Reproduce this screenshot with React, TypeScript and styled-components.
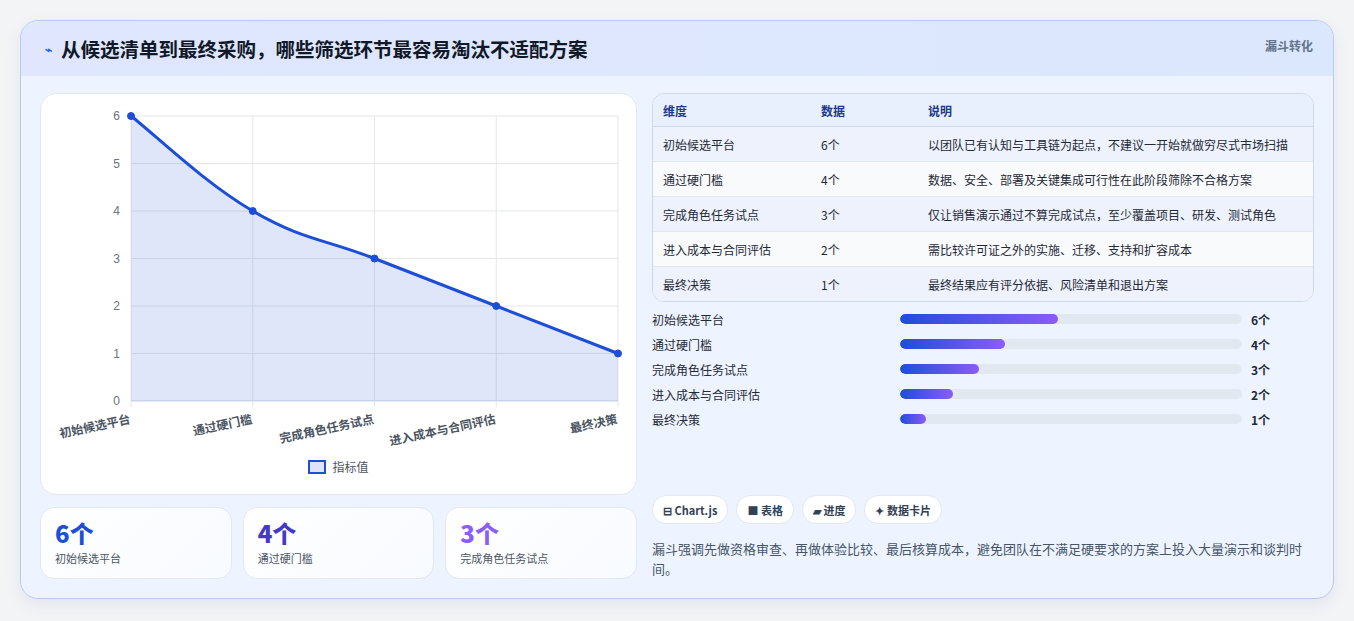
import React from 'react';
import styled, {createGlobalStyle} from 'styled-components';

const GlobalStyle = createGlobalStyle`
    body {
        margin: 0;
        background: #f3f4f6;
        font-family: "Noto Sans CJK SC", "Noto Sans", sans-serif;
    }
`;

const stages = [
    {name: '初始候选平台', value: 6, note: '以团队已有认知与工具链为起点，不建议一开始就做穷尽式市场扫描'},
    {name: '通过硬门槛', value: 4, note: '数据、安全、部署及关键集成可行性在此阶段筛除不合格方案'},
    {name: '完成角色任务试点', value: 3, note: '仅让销售演示通过不算完成试点，至少覆盖项目、研发、测试角色'},
    {name: '进入成本与合同评估', value: 2, note: '需比较许可证之外的实施、迁移、支持和扩容成本'},
    {name: '最终决策', value: 1, note: '最终结果应有评分依据、风险清单和退出方案'},
];

const Page = styled.div`
    padding: 20px 20px 21px 20px;
`;

const Card = styled.div`
    border: 1px solid #b9c9ee;
    border-radius: 18px;
    background: #eef4ff;
    overflow: hidden;
    box-shadow: 0 6px 16px rgba(30, 60, 140, 0.08);
`;

const Header = styled.div`
    height: 55px;
    background: linear-gradient(90deg, #dfe6fd, #dbe7fd);
    display: flex;
    align-items: center;
    justify-content: space-between;
    padding: 0 20px 0 24px;
    box-sizing: border-box;
`;

const Title = styled.h1`
    margin: 0;
    font-size: 19.5px;
    font-weight: 700;
    color: #111827;
    display: flex;
    align-items: center;
    gap: 9px;
`;

const TitleIcon = styled.span`
    color: #2563eb;
    font-size: 12px;
`;

const Tag = styled.span`
    font-size: 12px;
    font-weight: 700;
    color: #64748b;
    align-self: flex-start;
    margin-top: 16px;
`;

const Body = styled.div`
    display: grid;
    grid-template-columns: 597px 662px;
    gap: 15px;
    padding: 17px 19px 19px 19px;
`;

const Column = styled.div`
    display: flex;
    flex-direction: column;
    gap: 12px;
`;

const ChartCard = styled.div`
    background: #fff;
    border: 1px solid #e2e8f0;
    border-radius: 16px;
    height: 402px;
    box-sizing: border-box;
    display: flex;
    flex-direction: column;
    align-items: center;
`;

const Legend = styled.div`
    display: flex;
    align-items: center;
    gap: 6px;
    font-size: 12px;
    color: #4b5563;
    margin-top: 4px;
`;

const LegendBox = styled.span`
    width: 14px;
    height: 10px;
    border: 2px solid #1d4ed8;
    background: #dde4f7;
`;

const Stats = styled.div`
    display: grid;
    grid-template-columns: repeat(3, 1fr);
    gap: 11px;
`;

const Stat = styled.div`
    background: linear-gradient(135deg, #fff, #f7faff);
    border: 1px solid #e2e8f0;
    border-radius: 14px;
    height: 72px;
    box-sizing: border-box;
    padding: 10px 14px;
`;

const StatValue = styled.div<{ $color: string }>`
    font-size: 24px;
    font-weight: 800;
    line-height: 30px;
    color: ${p => p.$color};
`;

const StatLabel = styled.div`
    font-size: 11px;
    color: #4b5563;
    margin-top: 2px;
`;

const Table = styled.table`
    width: 100%;
    border-collapse: separate;
    border-spacing: 0;
    border: 1px solid #cfd8ea;
    border-radius: 12px;
    overflow: hidden;
    font-size: 12px;
    background: #f8fafc;
`;

const Th = styled.th`
    text-align: left;
    font-weight: 700;
    color: #1e3a8a;
    background: #e8effd;
    height: 32px;
    padding: 0 10px;
    border-bottom: 1px solid #cfd8ea;
`;

const Tr = styled.tr<{ $odd: boolean }>`
    background: ${p => p.$odd ? '#edf2fc' : '#f8fafc'};
`;

const Td = styled.td<{ $last: boolean }>`
    height: 34px;
    padding: 0 10px;
    color: #1f2937;
    border-bottom: ${p => p.$last ? 'none' : '1px solid #e2e8f0'};
    white-space: nowrap;
`;

const Bars = styled.div`
    display: flex;
    flex-direction: column;
    gap: 7px;
    margin-top: -4px;
`;

const BarRow = styled.div`
    display: grid;
    grid-template-columns: 248px 342px 1fr;
    align-items: center;
    font-size: 12px;
    height: 18px;
    color: #1f2937;
`;

const Track = styled.div`
    height: 10px;
    border-radius: 5px;
    background: #e2e8f0;
    overflow: hidden;
`;

const Fill = styled.div`
    height: 100%;
    border-radius: 5px;
    background: linear-gradient(90deg, #1d4ed8, #8b5cf6);
`;

const BarValue = styled.span`
    font-weight: 700;
    padding-left: 9px;
`;

const Chips = styled.div`
    display: flex;
    gap: 8px;
    margin-top: auto;
    margin-bottom: 3px;
`;

const Chip = styled.span`
    background: #fff;
    border: 1px solid #e2e8f0;
    border-radius: 14px;
    height: 27px;
    padding: 0 10px;
    display: flex;
    align-items: center;
    gap: 3px;
    font-size: 11px;
    font-weight: 700;
    color: #334155;
`;

const Note = styled.p`
    margin: 0;
    font-size: 13px;
    line-height: 20px;
    color: #475569;
`;

const W = 597, H = 360;
const px = (i: number) => 91 + i * 121.75;
const py = (v: number) => 307 - v * 47.5;

function smoothPath(pts: [number, number][]) {
    let d = `M${pts[0][0]},${pts[0][1]}`;
    for (let i = 0; i < pts.length - 1; i++) {
        const p0 = pts[i - 1] || pts[i];
        const p1 = pts[i];
        const p2 = pts[i + 1];
        const p3 = pts[i + 2] || p2;
        const t = 0.2;
        const c1 = [p1[0] + (p2[0] - p0[0]) * t, p1[1] + (p2[1] - p0[1]) * t];
        const c2 = [p2[0] - (p3[0] - p1[0]) * t, p2[1] - (p3[1] - p1[1]) * t];
        d += ` C${c1[0]},${c1[1]} ${c2[0]},${c2[1]} ${p2[0]},${p2[1]}`;
    }
    return d;
}

const LineChart: React.FC = () => {
    const pts = stages.map((s, i) => [px(i), py(s.value)] as [number, number]);
    const line = smoothPath(pts);
    return (
        <svg width={W} height={H} viewBox={`0 0 ${W} ${H}`}>
            {[0, 1, 2, 3, 4, 5, 6].map(v => (
                <g key={v}>
                    <line x1={91} x2={578} y1={py(v)} y2={py(v)} stroke={v === 0 ? '#cbd5e1' : '#e5e7eb'}/>
                    <text x={80} y={py(v) + 4} fontSize="12" fill="#6b7280" textAnchor="end"
                          fontFamily="Liberation Sans, sans-serif">{v}</text>
                </g>
            ))}
            {stages.map((s, i) => (
                <g key={s.name}>
                    <line x1={px(i)} x2={px(i)} y1={py(6)} y2={py(0) + 6} stroke="#e5e7eb"/>
                    <text x={px(i)} y={py(0) + 22} fontSize="12" fill="#4b5563" fontWeight="700"
                          textAnchor="end" transform={`rotate(-12 ${px(i)} ${py(0) + 22})`}>{s.name}</text>
                </g>
            ))}
            <path d={`${line} L${px(4)},${py(0)} L${px(0)},${py(0)} Z`} fill="#1d4ed8" fillOpacity="0.14"/>
            <path d={line} fill="none" stroke="#1d4ed8" strokeWidth="3"/>
            {pts.map((p, i) => (
                <circle key={i} cx={p[0]} cy={p[1]} r="3.5" fill="#1d4ed8" stroke="#1d4ed8"/>
            ))}
        </svg>
    );
};

const statColors = ['#1d4ed8', '#4338ca', '#8b5cf6'];

const App: React.FC = () => (
    <Page>
        <GlobalStyle/>
        <Card>
            <Header>
                <Title><TitleIcon>⌁</TitleIcon>从候选清单到最终采购，哪些筛选环节最容易淘汰不适配方案</Title>
                <Tag>漏斗转化</Tag>
            </Header>
            <Body>
                <Column>
                    <ChartCard>
                        <LineChart/>
                        <Legend><LegendBox/>指标值</Legend>
                    </ChartCard>
                    <Stats>
                        {stages.slice(0, 3).map((s, i) => (
                            <Stat key={s.name}>
                                <StatValue $color={statColors[i]}>{s.value}个</StatValue>
                                <StatLabel>{s.name}</StatLabel>
                            </Stat>
                        ))}
                    </Stats>
                </Column>
                <Column>
                    <Table>
                        <thead>
                        <tr>
                            <Th style={{width: 138}}>维度</Th>
                            <Th style={{width: 87}}>数据</Th>
                            <Th>说明</Th>
                        </tr>
                        </thead>
                        <tbody>
                        {stages.map((s, i) => (
                            <Tr key={s.name} $odd={i % 2 === 0}>
                                <Td $last={i === 4}>{s.name}</Td>
                                <Td $last={i === 4}>{s.value}个</Td>
                                <Td $last={i === 4}>{s.note}</Td>
                            </Tr>
                        ))}
                        </tbody>
                    </Table>
                    <Bars>
                        {stages.map(s => (
                            <BarRow key={s.name}>
                                <span>{s.name}</span>
                                <Track><Fill style={{width: `${(s.value / 13) * 100}%`}}/></Track>
                                <BarValue>{s.value}个</BarValue>
                            </BarRow>
                        ))}
                    </Bars>
                    <Chips>
                        <Chip>⊟ Chart.js</Chip>
                        <Chip>■ 表格</Chip>
                        <Chip>▰ 进度</Chip>
                        <Chip>✦ 数据卡片</Chip>
                    </Chips>
                    <Note>漏斗强调先做资格审查、再做体验比较、最后核算成本，避免团队在不满足硬要求的方案上投入大量演示和谈判时间。</Note>
                </Column>
            </Body>
        </Card>
    </Page>
);

export default App;
